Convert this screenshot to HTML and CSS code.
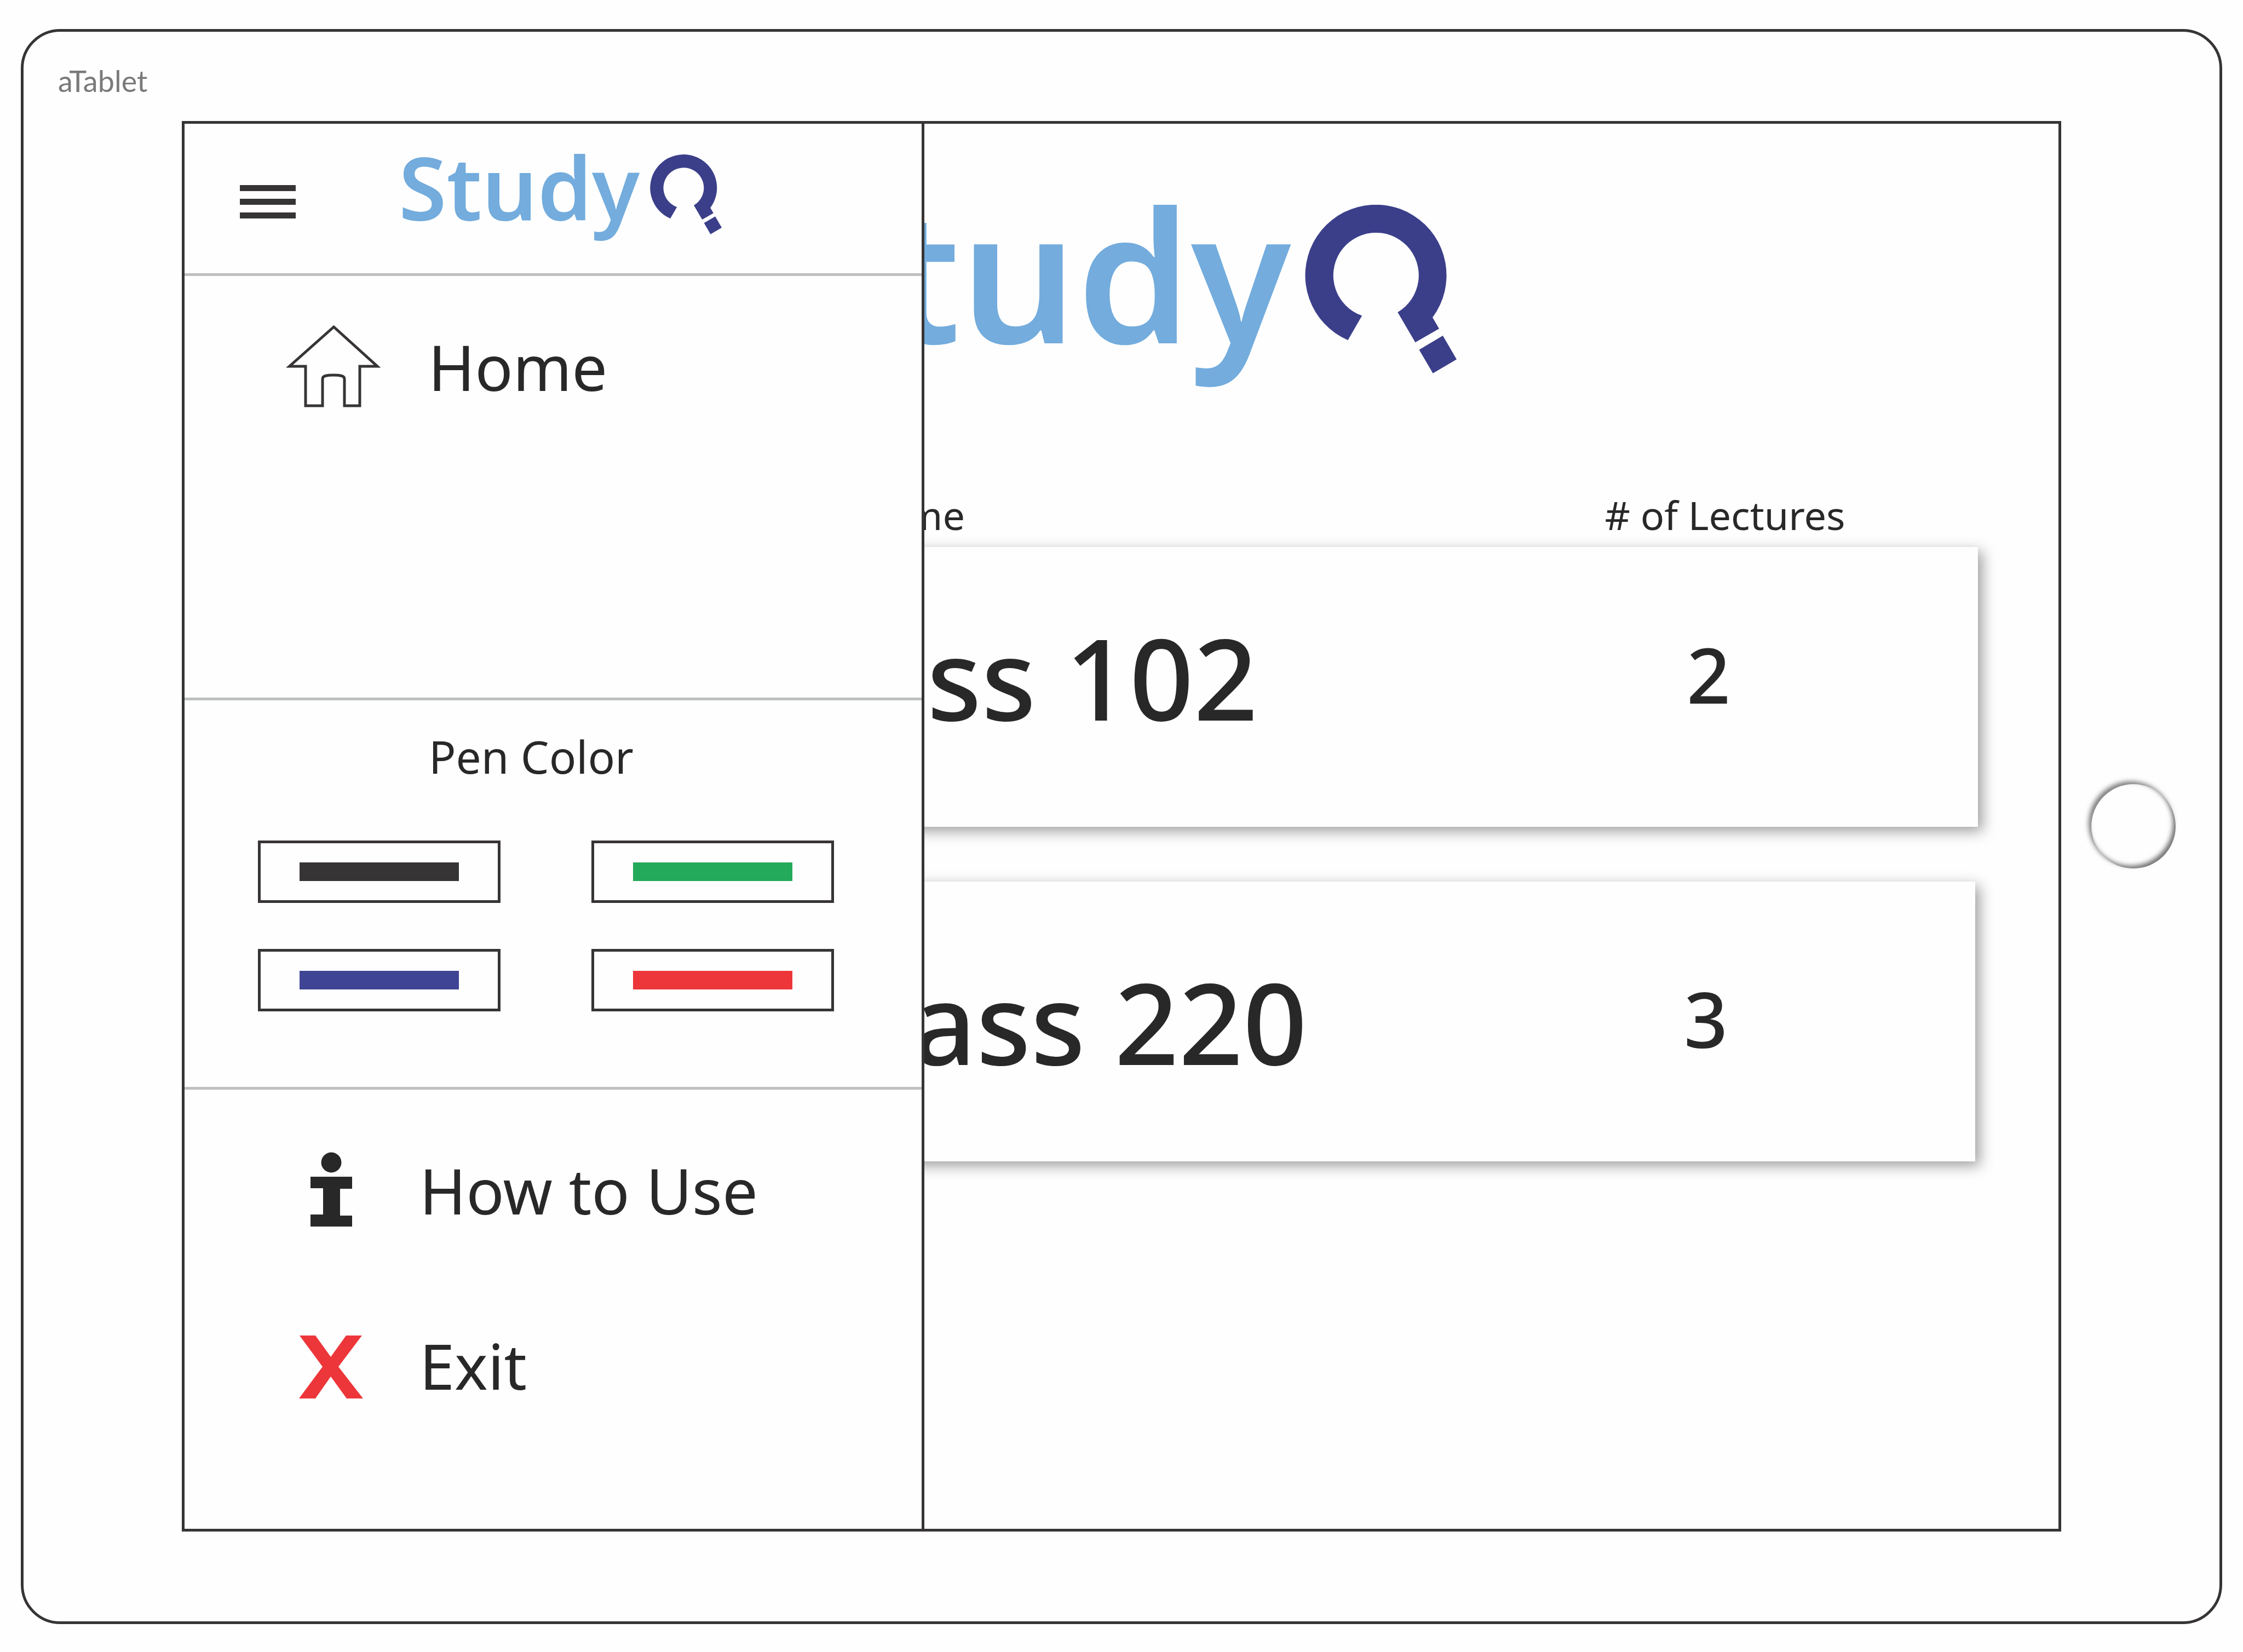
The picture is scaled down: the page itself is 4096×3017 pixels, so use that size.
FILE: index.html
```html
<!DOCTYPE html>
<html lang="en">
<head>
<meta charset="utf-8">
<meta name="viewport" content="width=device-width, initial-scale=1">
<title>StudyQ</title>
<link rel="stylesheet" href="styles.css">
</head>
<body>
<svg class="sprite" aria-hidden="true">
  <symbol id="q-mark" viewBox="0 0 277 308">
    <path d="M78.4 247.2A129 129 0 1 1 233 205.8L245 226.2L201.5 251.3L169.3 196.2A78 78 0 1 0 104.2 202.6Z"/>
    <path d="M251.8 239L277 282.2L233.7 307.8L208.5 264.7Z"/>
  </symbol>
</svg>
<div class="tablet">
  <div class="tablet-name">aTablet</div>
  <div class="screen">
    <main class="classes">
      <h1 class="logo logo-large">Study<svg class="logo-mark"><use href="#q-mark"/></svg></h1>
      <table class="class-table">
        <thead>
          <tr class="table-head"><th class="name">Class Name</th><th class="count"># of Lectures</th></tr>
        </thead>
        <tbody class="cards">
          <tr class="card card-first"><td class="name">Class 102</td><td class="count">2</td></tr>
          <tr class="card card-second"><td class="name">Class 220</td><td class="count">3</td></tr>
        </tbody>
      </table>
    </main>
    <aside class="drawer">
      <header class="drawer-head">
        <button class="menu-button" type="button" aria-label="Close menu"><span></span><span></span><span></span></button>
        <div class="logo logo-small">Study<svg class="logo-mark"><use href="#q-mark"/></svg></div>
      </header>
      <nav class="section section-main">
        <a class="item" href="#home">
          <svg class="icon" width="173" height="151" viewBox="0 0 173 151"><path d="M87.500 4L6.500 76H36V148H67V99C67 93 76 92 87 92S107 93 107 99V148H135V76H167Z" fill="none" stroke="#373435" stroke-width="5"/></svg>
          <span>Home</span>
        </a>
      </nav>
      <section class="section section-pens">
        <h2 class="pens-title">Pen Color</h2>
        <div class="pens">
          <button class="pen pen-black" type="button" aria-label="Black"><span></span></button>
          <button class="pen pen-green" type="button" aria-label="Green"><span></span></button>
          <button class="pen pen-blue" type="button" aria-label="Blue"><span></span></button>
          <button class="pen pen-red" type="button" aria-label="Red"><span></span></button>
        </div>
      </section>
      <nav class="section section-more">
        <a class="item" href="#help">
          <svg class="icon" width="76" height="136" viewBox="0 0 76 136"><ellipse cx="38" cy="19" rx="18.500" ry="18.500"/><path d="M0 45H76V67H54V116H76V136H0V114H23V66H0Z"/></svg>
          <span>How to Use</span>
        </a>
        <a class="item" href="#exit">
          <svg class="icon icon-exit" width="117" height="126" viewBox="0 0 117 126"><path d="M1 10H30L58 49L86 10H115L72 67L117 125H87L58 85L30 125H0L43 67Z"/></svg>
          <span>Exit</span>
        </a>
      </nav>
    </aside>
  </div>
  <div class="bezel"><button class="home-button" type="button" aria-label="Home button"></button></div>
</div>
</body>
</html>
```
FILE: styles.css
```css
* { box-sizing: border-box; }

body {
  margin: 0;
  min-height: 100vh;
  padding: 53px 38px 51px;
  display: flex;
  background: #fefefe;
  color: #282828;
  font-family: "Noto Sans", "Open Sans", sans-serif;
}

button { margin: 0; padding: 0; border: 0; background: none; font: inherit; }
h1, h2 { margin: 0; font-weight: 400; }
svg { display: block; flex: none; }
.sprite { position: absolute; width: 0; height: 0; }

/* Device frame */
.tablet {
  flex: 1;
  display: grid;
  grid-template-columns: 289px 1fr 289px;
  grid-template-rows: 163px 1fr 164px;
  border: 5px solid #373435;
  border-radius: 72px;
}
.tablet-name {
  grid-column: 1 / -1;
  padding: 58px 0 0 63px;
  color: #7b7a7a;
  font: 54px/64px Lato, sans-serif;
}
.screen {
  grid-column: 2;
  display: grid;
  grid-template-columns: 1351px 1fr;
  overflow: hidden;
  border: 5px solid #373435;
}
.bezel {
  display: flex;
  align-items: center;
  justify-content: center;
  padding-right: 26px;
}
.home-button {
  width: 154px;
  height: 154px;
  border-radius: 50%;
  box-shadow: -5px -5px 8px rgba(0, 0, 0, .5), inset -5px -5px 8px rgba(0, 0, 0, .55);
}

/* Logo */
.logo {
  display: flex;
  align-items: flex-start;
  color: #73acdd;
  font-weight: 600;
}
.logo-mark { fill: #3b3f8a; }
.logo-large { justify-content: center; font-size: 333px; line-height: 333px; }
.logo-large .logo-mark { width: 277px; height: 308px; margin: 42px 0 0 26px; }
.logo-small { font-size: 159px; line-height: 159px; }
.logo-small .logo-mark { width: 131px; height: 146px; margin: 21px 0 0 19px; }

/* Class list, partly covered by the open drawer */
.classes { grid-area: 1 / 1 / 2 / -1; padding: 106px 147px 0; }
.class-table { display: block; margin-top: 208px; }
.class-table thead { display: block; }
.table-head, .card { display: grid; align-items: center; }
.table-head {
  grid-template-columns: 1fr 924px;
  margin-bottom: 9px;
  font-size: 72px;
  line-height: 100px;
}
.class-table th, .class-table td { padding: 0; font-weight: 400; }
.class-table .name { text-align: right; }
.class-table .count { text-align: center; }
.class-table .table-head .name { padding-right: 926px; }
.cards { display: grid; gap: 100px; }
.card {
  grid-template-columns: 1fr 984px;
  height: 511px;
  background: #fefefe;
  box-shadow: 8px 8px 24px rgba(0, 0, 0, .38);
}
.class-table .card td { font-weight: 500; }
.card .name { font-size: 205px; line-height: 205px; }
.class-table .card .count { padding-bottom: 12px; font-size: 140px; line-height: 140px; }
.card-first { padding-bottom: 36px; }
.class-table .card-first .name { padding-right: 331px; }
.card-second { margin-right: 5px; }
.class-table .card-second .name { padding-right: 236px; }

/* Drawer */
.drawer {
  grid-area: 1 / 1;
  z-index: 1;
  display: flex;
  flex-direction: column;
  border-right: 5px solid #373435;
  background: #fefefe;
}
.drawer-head {
  display: flex;
  align-items: flex-start;
  gap: 188px;
  height: 278px;
  padding: 35px 0 0 101px;
  border-bottom: 5px solid #bdbfc1;
}
.menu-button {
  display: grid;
  gap: 14px;
  width: 102px;
  margin-top: 77px;
}
.menu-button span { height: 11px; background: #373435; }

.section-main { height: 775px; padding: 88px 0 0 185px; border-bottom: 5px solid #bdbfc1; }
.section-pens { height: 711px; padding: 44px 0 0 134px; border-bottom: 5px solid #bdbfc1; }
.section-more { display: grid; gap: 168px; padding: 106px 0 0 181px; }

.item {
  display: grid;
  grid-template-columns: 173px 1fr;
  align-items: center;
  justify-items: start;
  gap: 75px;
  height: 152px;
  color: #282828;
  font-size: 115px;
  line-height: 148px;
  text-decoration: none;
}
.item span { padding-top: 4px; }
.section-main .item { gap: 87px; }
.icon { justify-self: center; fill: #282828; }
.icon-exit { fill: #ed363a; }

.pens-title {
  padding-left: 312px;
  font-size: 82px;
  line-height: 116px;
}
.pens {
  display: grid;
  grid-template-columns: 443px 443px;
  gap: 84px 166px;
  margin-top: 96px;
}
.pen {
  display: grid;
  place-items: center;
  height: 114px;
  border: 5px solid #373435;
}
.pen span { width: 291px; height: 34px; }
.pen-black span { background: #373435; }
.pen-green span { background: #23aa5b; }
.pen-blue span { background: #404495; }
.pen-red span { background: #ed363a; }
```
